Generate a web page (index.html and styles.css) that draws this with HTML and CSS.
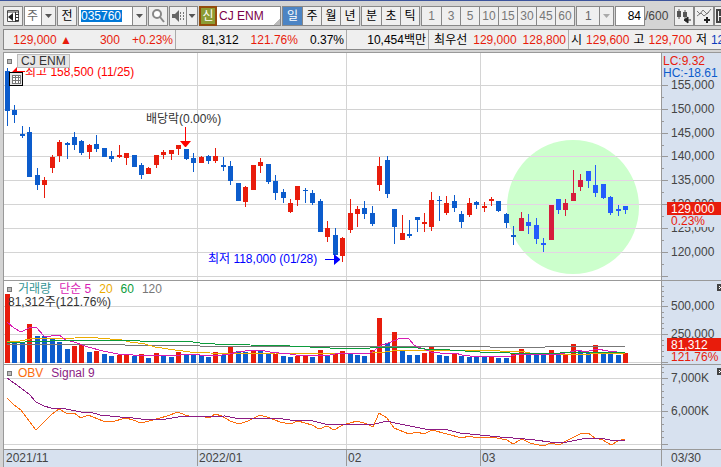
FILE: index.html
```html
<!doctype html>
<html lang="ko">
  <head>
    <meta charset="UTF-8" />
    <meta name="viewport" content="width=device-width, initial-scale=1.0" />
    <title>CJ ENM</title>
    <link rel="stylesheet" href="styles.css">
  </head>
  <body>
    <!-- Toolbar -->
    <div class="toolbar">
      <button class="btn" aria-label="패널">
        <svg width="14" height="14"><path d="M1.500 1.500h11v11h-11z" fill="#fff" stroke="#555"/><path d="M1 3h12M9.500 3v10M10 5.500h3M10 8.500h3M10 11.500h3" stroke="#333"/><path d="M2 8l5-4v8z" fill="#222"/></svg>
      </button>
      <span class="combo kind">
        <select aria-label="종목구분"><option>주</option></select>
        <span class="arrow"></span>
      </span>
      <button class="btn">전</button>
      <span class="combo code">
        <input type="text" aria-label="종목코드" value="035760" />
        <button class="arrow" aria-label="목록"></button>
      </span>
      <button class="btn" aria-label="검색">
        <svg width="14" height="14"><circle cx="6" cy="5" r="4" fill="#fff" stroke="#888" stroke-width="2"/><path d="M9 8l4 5" stroke="#888" stroke-width="2"/></svg>
      </button>
      <span class="combo sound">
        <button aria-label="음성">
          <svg width="14" height="14"><path d="M1 5h3l4-4v12l-4-4H1z" fill="#666"/><path d="M9 4h1M9 7h1M9 10h1M12 4h1M12 7h1M12 10h1" stroke="#777" stroke-width="2"/></svg>
        </button>
        <button class="arrow" aria-label="음성 목록"></button>
      </span>
      <span class="stock"><b>신</b><span>CJ ENM</span></span>
      <span class="group">
        <button class="on">일</button><button>주</button><button>월</button><button>년</button>
      </span>
      <span class="group">
        <button>분</button><button>초</button><button>틱</button>
      </span>
      <span class="group minutes">
        <button>1</button><button>3</button><button>5</button><button>10</button><button>15</button><button>30</button><button>45</button><button>60</button>
      </span>
      <span class="combo unit">
        <select aria-label="단위" disabled><option>1</option></select>
        <span class="arrow"></span>
      </span>
      <span class="count">
        <input type="text" id="bar-count" value="84" /><label for="bar-count">/600</label>
      </span>
      <span class="tools">
        <button class="btn" aria-label="차트 추가">
          <svg width="16" height="16"><path d="M1 3h4v6H1zM7 4h4v5H7z" fill="#555"/><path d="M3 1v10M9 2v9" stroke="#555"/><path d="M8 12l4-3v6zM11 12h4" fill="#222" stroke="#222"/></svg>
        </button>
        <button class="btn" aria-label="지표 추가">
          <svg width="16" height="16"><path d="M1 3l3 3 3-4 4 4 4-5M1 8l4-3 3 3 5-4" fill="none" stroke="#777"/><path d="M8 12h6M11 9v6" stroke="#222" stroke-width="2"/></svg>
        </button>
        <button class="btn" aria-label="저장">
          <svg width="16" height="16"><path d="M1 2h13v12H1zM4 2v5h8V2M4 14v-4h8v4" fill="none" stroke="#444" stroke-width="2"/></svg>
        </button>
      </span>
    </div>

    <!-- Quote bar -->
    <div class="quote">
      <div class="cell now"><span class="up">129,000 ▲</span><span class="up diff">300</span><span class="up">+0.23%</span></div>
      <div class="cell amount"><span>81,312</span><span class="up">121.76%</span><span>0.37%</span></div>
      <div class="cell money"><span>10,454백만</span></div>
      <div class="cell best"><span>최우선</span><span class="up">129,000</span><span class="up">128,800</span></div>
      <div class="cell range">
        <span>시</span><span class="up">129,600</span><span>고</span><span class="up">129,700</span><span>저</span><span class="down">128,400</span>
      </div>
    </div>

    <!-- Chart -->
    <div class="chart">
      <div class="pane price">
        <svg class="plot">
          <g transform="translate(-4 -53)">
            <ellipse cx="573" cy="207" rx="66" ry="67" fill="#ccffcc"/>
            <g id="price-grid"></g>
            <g id="candles"></g>
            <!-- high, ex-dividend and low marks -->
            <path d="M17 67v6h-6zM17 71h8v1h-8z" fill="#f00"/>
            <text x="25" y="76" fill="#f00">최고 158,500 (11/25)</text>
            <text x="146" y="123" fill="#333">배당락(0.00%)</text>
            <path d="M185 127h1v14h5l-5 6h-1l-5-6h5z" fill="#f00"/>
            <text x="208" y="263" fill="#00f">최저 118,000 (01/28)</text>
            <path d="M325 259h9v-5l6 5v1l-6 5v-5h-9z" fill="#00f"/>
            <g class="line">
              <path d="M9.500 72.500h13v13h-13z" fill="#e6e6e6" stroke="#000"/>
              <path d="M12.500 75.500h8v8h-8zM12 77.500h9M12 80.500h9M15.500 75v9M18.500 75v9" fill="#fff" stroke="#777"/>
            </g>
          </g>
        </svg>
        <svg class="axis">
          <g transform="translate(-661 -53)">
            <g id="price-axis"></g>
            <text x="662" y="65" fill="#e81c0c">LC:9.32</text>
            <text x="662" y="77" fill="#0c5ccc">HC:-18.61</text>
            <path d="M666 202h60v13h-60z" fill="#e81c0c"/>
            <path d="M668 215h50v12h-50z" fill="#d7e1ef"/>
            <text x="670" y="213" fill="#fff">129,000</text>
            <text x="670" y="225" fill="#e81c0c">0.23%</text>
          </g>
        </svg>
        <div class="legend"><i></i><span class="tag">CJ ENM</span></div>
      </div>

      <div class="pane volume">
        <svg class="plot">
          <g transform="translate(-4 -281)">
            <g id="volume-grid"></g>
            <g id="volumes"></g>
            <g class="trend">
              <polyline stroke="#777" points="7,344 120,344 125,345 190,345 200,346 485,346 490,347 545,347 550,346 625,346"/>
              <polyline stroke="#ecac00" points="7,341 20,341 30,339 75,338 85,337 110,339 118,339 130,342 145,344 155,347 175,350 190,352 210,353 260,354 275,353 310,354 370,353 385,352 400,350 480,350 500,351 520,351 530,353 560,354 590,354 600,353 625,353"/>
              <polyline stroke="#d81cb4" points="7,322 14,328 21,332 29,328 36,327 44,336 51,336 59,335 66,340 74,342 88,347 103,351 118,354 133,355 180,355 190,354 200,355 222,355 230,354 237,352 245,351 260,350 270,352 279,353 290,354 296,355 312,356 330,355 340,353 370,353 375,350 381,345 386,344 393,341 401,338 409,339 414,345 418,347 424,349 431,352 440,353 455,353 462,355 470,356 494,356 507,357 515,355 530,354 560,354 570,352 578,350 585,352 597,349 608,351 625,353"/>
              <polyline stroke="#0c9c3c" points="7,342 25,342 50,341 80,340 135,340 140,341 185,341 200,343 215,344 240,344 250,345 290,346 330,348 370,348 390,347 410,347 425,349 450,350 480,352 510,353 560,353 580,352 625,352"/>
            </g>
            <text x="8" y="306" fill="#333">81,312주(121.76%)</text>
          </g>
        </svg>
        <svg class="axis">
          <g transform="translate(-661 -281)">
            <g id="volume-axis"></g>
            <path d="M666 338h60v13h-60z" fill="#e81c0c"/>
            <text x="670" y="349" fill="#fff">81,312</text>
            <text x="670" y="361" fill="#e81c0c">121.76%</text>
            <path d="M716 284h7v7h-7z" fill="#444"/><path d="M718 286l3 3M721 286l-3 3" stroke="#fff"/>
          </g>
        </svg>
        <div class="legend">
          <i></i><span class="teal">거래량</span><span class="pink">단순 5</span><span class="gold">20</span><span class="green">60</span><span class="gray">120</span>
        </div>
      </div>

      <div class="pane obv">
        <svg class="plot">
          <g transform="translate(-4 -365)">
            <g id="obv-grid"></g>
            <g class="trend">
              <polyline stroke="#fc6c0c" points="7,398 14,405 21,410 29,421 36,430 44,422 51,415 59,409 66,413 74,413 81,418 88,415 103,421 111,422 126,418 133,420 141,423 153,420 167,416 178,412 185,415 193,417 201,416 209,418 215,414 222,416 230,421 239,424 248,421 260,415 270,418 280,422 290,424 298,421 312,425 319,429 327,426 334,430 343,425 357,421 367,424 373,427 379,413 387,418 394,428 409,434 417,432 424,434 432,430 447,434 462,438 469,436 477,438 492,437 507,440 513,444 522,439 530,443 543,446 551,443 559,445 568,440 580,434 588,433 595,438 603,440 611,445 618,441 625,439"/>
              <polyline stroke="#8c1c84" points="7,378 14,383 29,394 36,402 44,406 51,408 66,409 81,412 90,412 100,415 120,417 133,418 141,419 166,419 178,417 225,416 240,419 255,418 275,418 290,420 313,421 325,424 338,425 375,424 387,421 395,423 410,426 425,429 448,430 460,433 480,435 500,437 513,438 525,439 535,440 550,442 567,442 577,440 588,438 600,438 610,440 625,440"/>
            </g>
          </g>
        </svg>
        <svg class="axis">
          <g transform="translate(-661 -365)">
            <g id="obv-axis"></g>
            <path d="M716 368h7v7h-7z" fill="#444"/><path d="M718 370l3 3M721 370l-3 3" stroke="#fff"/>
          </g>
        </svg>
        <div class="legend"><i></i><span class="orange">OBV</span><span class="purple">Signal 9</span></div>
      </div>

      <div class="pane dates">
        <svg class="plot">
          <g transform="translate(-4 -450)">
            <path class="line" d="M197.500 450v20M346.500 450v20M480.500 450v20" stroke="#999"/>
            <text x="6" y="462">2021/11</text>
            <text x="199" y="462">2022/01</text>
            <text x="348" y="462">02</text>
            <text x="482" y="462">03</text>
          </g>
        </svg>
        <svg class="axis"><text x="9" y="12">03/30</text></svg>
      </div>
    </div>

    <script src="chart.js"></script>
  </body>
</html>
```
FILE: styles.css
```css
* {
  box-sizing: border-box;
}
body {
  margin: 0;
  min-height: 100vh;
  display: flex;
  flex-direction: column;
  overflow: hidden;
  background-color: #d4d4d4;
  border-top: 1px solid #3c549c;
  font-family: "Liberation Sans", "Noto Sans CJK KR", sans-serif;
  font-size: 12px;
  line-height: 18px;
  color: #000;
}
button,
input,
select {
  font: inherit;
  color: inherit;
  margin: 0;
  padding: 0;
  border: none;
  border-radius: 0;
  background: none;
}

/* toolbar */
.toolbar {
  display: flex;
  flex: none;
  gap: 1px;
  height: 28px;
  padding: 5px 0 3px 3px;
}
.toolbar > * {
  flex: none;
}
.btn,
.combo,
.group,
.count input {
  height: 20px;
  border: 1px solid #888;
  background-color: #efefef;
}
.btn {
  width: 20px;
  flex: none;
}
.toolbar svg {
  display: block;
  margin: auto;
}
.combo {
  display: flex;
}
.combo select {
  appearance: none;
  width: 17px;
  padding-left: 2px;
  background-color: #fff;
  color: #666;
}
.kind {
  width: 32px;
}
.arrow {
  flex: none;
  width: 14px;
  border-left: 1px solid #888;
}
.arrow::before {
  content: "";
  display: block;
  margin: 7px auto 0;
  width: 7px;
  height: 4px;
  background-color: #555;
  clip-path: polygon(0 0, 100% 0, 50% 100%);
}
button.arrow::before {
  margin-top: 0;
}
.code {
  width: 69px;
  background-color: #fff;
}
.code input {
  flex: 1;
  min-width: 0;
  padding: 3px 10px 3px 2px;
  background: #0078d7 content-box;
  color: #fff;
}
.code .arrow {
  background-color: #efefef;
}
.sound {
  width: 29px;
}
.sound button {
  flex: 1;
}
.sound .arrow {
  flex: none;
  width: 11px;
}
.stock {
  display: flex;
  width: 82px;
  height: 20px;
  background: linear-gradient(135deg, #fff 93%, #bbb 93%);
  border: 1px solid #888;
  color: #7c0048;
}
.stock b {
  width: 18px;
  margin: -1px 2px -1px -1px;
  border: 2px solid #944c0c;
  background-color: #8c9c34;
  color: #fff;
  font-weight: normal;
  line-height: 16px;
  text-align: center;
}
.group {
  display: flex;
}
.group button {
  width: 19px;
  border-left: 1px solid #888;
}
.group button:first-child {
  border-left: none;
}
.group .on {
  background-color: #4c84c4;
  color: #fff;
}
.minutes,
.unit {
  color: #777;
}
.unit {
  width: 38px;
}
.unit select {
  width: 22px;
  padding-left: 8px;
  background-color: #efefef;
  opacity: 1;
}
.unit .arrow::before {
  background-color: #aaa;
}
.count {
  color: #444;
}
.count input {
  width: 30px;
  padding-right: 3px;
  background-color: #fff;
  color: #000;
  text-align: right;
}
.tools {
  display: flex;
  margin-left: auto;
  margin-right: -13px;
}

/* quote bar */
.quote {
  display: flex;
  flex: none;
  height: 21px;
  margin-left: 3px;
  border: 1px solid #888;
  border-right: none;
  background-color: #efefef;
  white-space: nowrap;
}
.cell {
  display: flex;
  flex: none;
  justify-content: flex-end;
  gap: 12px;
  padding: 1px 2px;
  border-right: 1px solid #aaa;
}
.now {
  width: 172px;
}
.now .diff {
  margin-left: 16px;
}
.amount {
  width: 171px;
}
.money {
  width: 82px;
}
.best {
  width: 140px;
  gap: 6px;
}
.range {
  flex: 1;
  justify-content: flex-start;
  gap: 4px;
  overflow: hidden;
  border-right: none;
}
.up {
  color: #e81c0c;
}
.down {
  color: #0c3cbc;
}

/* chart */
.chart {
  display: flex;
  flex: 1;
  flex-direction: column;
  margin: 2px 0 0 3px;
  border-left: 1px solid #999;
  border-top: 1px solid #999;
  background-color: #fff;
}
.pane {
  position: relative;
  display: flex;
  flex: none;
  border-bottom: 1px solid #999;
}
.price {
  height: 228px;
}
.volume {
  height: 84px;
}
.obv {
  height: 85px;
}
.dates {
  flex: 1;
  border-bottom: none;
  background-color: #d7e1ef;
}
.plot {
  flex: 1;
  min-width: 0;
  height: 100%;
}
.axis {
  flex: none;
  width: 60px;
  height: 100%;
  border-left: 1px solid #999;
  background-color: #d7e1ef;
}
.dates svg {
  height: 16px;
}
.axis,
.dates {
  fill: #444;
}
#candles,
#volumes,
.line,
.grid,
.trend {
  shape-rendering: crispEdges;
}
.trend {
  fill: none;
}
.legend {
  position: absolute;
  top: 1px;
  left: 3px;
  display: flex;
  gap: 8px;
  line-height: 14px;
}
.legend i {
  width: 5px;
  height: 5px;
  margin: 5px -2px 0 0;
  border: 1px solid #777;
  background-color: #bbb;
}
.tag {
  margin-left: -1px;
  padding: 0 3px;
  border: 1px solid #bbb;
  background-color: #e6e6e6;
  color: #333;
  line-height: 12px;
}
.teal {
  color: #339494;
}
.pink {
  color: #d81cb4;
}
.gold {
  color: #ecac00;
}
.green {
  color: #0c9c3c;
}
.gray {
  color: #777;
}
.orange {
  color: #fc6c0c;
}
.purple {
  color: #8c1c84;
}
```
FILE: chart.js
```js
const FIRST_X = 7;
const STEP = 7.446;

// direction, high, body top, body bottom, low
const candles = `b 68 71 111 126|b 105 110 115 123|b 126 134 136 138|b 127 132 177 177|b 168 175 185 190|r 177 180 185 198
r 155 157 168 173|r 140 142 156 162|b 142 143 145 159|b 132 137 145 150|b 140 141 153 155|r 144 145 152 159
b 135 144 149 152|b 148 148 157 157|b 151 156 159 162|r 145 155 157 158|r 153 153 158 165|b 155 155 167 167
b 163 165 175 179|r 167 168 174 174|r 155 155 165 168|r 150 152 155 159|r 150 150 154 160|r 145 145 149 155
b 149 149 159 160|b 153 158 163 172|r 156 157 163 163|b 155 156 161 164|r 148 156 161 163|b 157 165 167 171
b 161 166 181 185|b 183 183 201 201|r 186 187 202 207|r 165 165 190 190|r 158 162 166 173|b 164 164 182 184
b 175 181 193 200|b 189 192 198 203|r 199 203 212 213|r 186 186 200 206|b 188 190 191 203|b 190 193 203 205
b 199 201 232 232|r 221 228 237 242|b 228 235 255 255|r 237 238 256 262|r 199 213 230 233|r 206 209 214 227
b 201 208 214 219|b 206 213 224 226|r 157 166 185 191|b 156 160 194 198|b 209 209 227 244|r 215 233 240 240
b 220 234 236 238|b 217 217 220 232|r 213 222 224 232|r 192 200 227 231|b 196 200 201 221|r 196 203 213 215
b 195 201 208 212|b 211 214 222 228|r 198 203 215 217|b 201 202 205 209|r 202 206 208 212|r 197 199 201 206
b 201 201 211 212|b 213 214 223 228|b 226 235 237 245|r 212 218 231 231|b 214 222 226 234|b 218 225 239 244
b 238 243 245 252|r 205 205 240 240|b 199 199 210 214|r 199 203 210 216|r 170 193 201 201|r 174 180 187 191
b 171 171 181 188|b 165 185 193 197|b 184 184 198 199|b 196 197 213 215|b 205 209 211 216|b 206 206 210 214`
  .split(/[|\n]/)
  .map(row => row.split(" "));

// direction and bar top
const volumes = `r294 b341 b343 r324 b336 b336 b339 b342 b349 r346 r345 b352 r351 b354 b356 r355 r355 b356 r354 b358 r353
b356 b357 r352 b355 b355 b355 b357 r352 b355 r347 b351 b352 r350 b350 b353 r354 b356 b357 r356 r356 b357
r350 b355 r354 r351 b354 b355 b356 r350 r318 b343 r332 b351 b355 b355 r353 r347 b355 b356 r354 b356 b357
b357 b357 r356 b358 b358 r354 r349 b355 b354 b355 r350 b355 r355 r344 b351 b352 r345 b354 b354 b355 r353`.split(/\s+/);

const colors = { r: "#e81c0c", b: "#0c5ccc" };
const highlight = { r: "#d61c3c", b: "#245cfc" };

function draw(id, markup) {
  document.getElementById(id).innerHTML = markup;
}

function rect(x, y, width, height, fill) {
  return `<rect x="${x}" y="${y}" width="${width}" height="${height}" fill="${fill}"/>`;
}

function barX(i) {
  return Math.round(FIRST_X + i * STEP);
}

function grid(id, top, height, rows) {
  let out = "";
  [197, 346, 480].forEach(x => (out += rect(x, top, 1, height, "#d4d4d4")));
  rows.forEach(y => (out += rect(4, y, "100%", 1, "#d4d4d4")));
  draw(id, `<g class="grid">${out}</g>`);
}

function axis(id, rows, minor) {
  let out = "";
  rows.forEach(([y, label]) => {
    out += rect(661, y, 6, 1, "#999");
    out += `<text x="670" y="${y + 4}">${label}</text>`;
  });
  minor.forEach(y => (out += rect(661, y, 2, 1, "#999")));
  draw(id, `<g class="grid">${out}</g>`);
}

grid("price-grid", 53, 227, [85, 109, 133, 156, 180, 204, 228, 252, 276]);
grid("volume-grid", 281, 83, [306, 334, 362]);
grid("obv-grid", 365, 84, [378, 411, 444]);

// softer grid lines inside the highlighted circle
document.getElementById("price-grid").innerHTML += [156, 180, 204, 228, 252]
  .map(y => {
    const half = Math.round(66 * Math.sqrt(1 - ((y - 207) / 67) ** 2));
    return rect(573 - half, y, half * 2, 1, "#e4d4e4");
  })
  .join("");

axis(
  "price-axis",
  [[85, "155,000"], [109, "150,000"], [133, "145,000"], [156, "140,000"], [180, "135,000"],
   [204, "130,000"], [228, "125,000"], [252, "120,000"], [276, ""]],
  [97, 121, 145, 168, 192, 216, 240, 264]
);
axis(
  "volume-axis",
  [[306, "500,000"], [334, "250,000"], [362, ""]],
  [286, 291, 296, 301, 312, 317, 323, 328, 340, 345, 351, 356]
);
axis(
  "obv-axis",
  [[378, "7,000K"], [411, "6,000K"], [444, ""]],
  [367, 372, 384, 391, 397, 404, 417, 424, 431, 437]
);

draw("candles", candles.map(([dir, high, top, bottom, low], i) => {
  const x = barX(i);
  const fill = (i > 68 ? highlight : colors)[dir];
  return rect(x, high, 1, low - high, fill) + rect(x - 2, top, 5, bottom - top, fill);
}).join(""));

draw("volumes", volumes.map((bar, i) => {
  const top = Number(bar.slice(1));
  return rect(barX(i) - 2, top, 5, 363 - top, colors[bar[0]]);
}).join(""));
```
